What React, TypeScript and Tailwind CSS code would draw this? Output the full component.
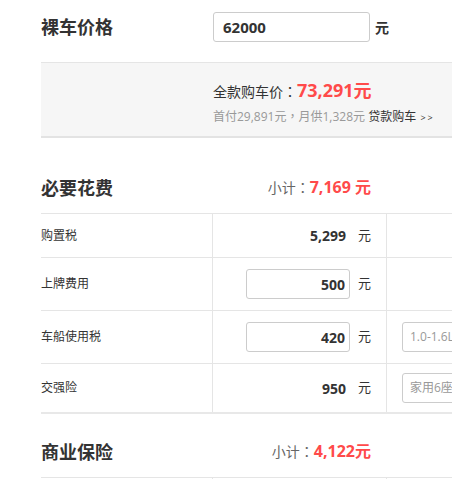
const FONT = "font-['Open_Sans','Noto_Sans_CJK_SC',sans-serif]";
const PUNCT = "font-['Noto_Sans_CJK_TC',sans-serif]";

type Row = {
  label: string;
  value: string;
  editable?: boolean;
  extra?: string;
  h: string;
};

const ROWS: Row[] = [
  { label: "购置税", value: "5,299", h: "h-[43px]" },
  { label: "上牌费用", value: "500", editable: true, h: "h-[53px]" },
  { label: "车船使用税", value: "420", editable: true, extra: "1.0-1.6L(含)", h: "h-[53px]" },
  { label: "交强险", value: "950", extra: "家用6座以下", h: "h-[49px]" },
];

function Section({ title, amount, h }: { title: string; amount: string; h: string }) {
  return (
    <div className={`flex items-end ${h} pb-[11px]`}>
      <h3 className="w-[171px] leading-[28px] text-[18px] font-bold text-[#333]">{title}</h3>
      <div className="w-[159px] leading-[28px] text-right text-[14px] text-[#666]">
        小计<span className={PUNCT}>：</span>
        <span className="text-[16px] font-bold text-[#ff4a4a]">{amount}</span>
      </div>
    </div>
  );
}

export default function App() {
  return (
    <div className={`${FONT} w-[452px] h-[479px] overflow-hidden bg-white text-[#333]`}>
      <div className="pl-[41px] w-[700px]">
        {/* 裸车价格 */}
        <div className="flex items-center h-[62px] pb-[8px]">
          <h2 className="w-[172px] text-[18px] font-bold">裸车价格</h2>
          <input
            readOnly
            value="62000"
            className="w-[157px] h-[30px] border border-[#ccc] rounded-[3px] px-[9px] text-[15px] font-bold text-[#333] outline-none"
          />
          <span className="ml-[5px] text-[14px] font-bold">元</span>
        </div>

        {/* 全款 */}
        <div className="bg-[#f6f6f6] border-t border-b-2 border-t-[#e5e5e5] border-b-[#e3e3e3] h-[76px] pl-[172px] pt-[14px]">
          <div className="flex items-baseline text-[14px] text-[#333]">
            全款购车价<span className={PUNCT}>：</span>
            <span className="text-[18px] font-bold text-[#ff4a4a]">73,291元</span>
          </div>
          <div className="mt-[3px] text-[12px] text-[#999]">
            首付29,891元<span className={PUNCT}>，</span>月供1,328元{" "}
            <span className="text-[#333]">贷款购车</span>
            <span className="text-[9px] text-[#333] tracking-[2px]"> &gt;&gt;</span>
          </div>
        </div>

        <Section title="必要花费" amount="7,169 元" h="h-[75px]" />

        <div className="border-t border-[#e5e5e5] border-b-2 border-b-[#e8e8e8]">
          {ROWS.map((r, i) => (
            <div
              key={r.label}
              className={`flex ${r.h} ${i > 0 ? "border-t border-[#e5e5e5]" : ""}`}
            >
              <div className="w-[171px] flex items-center text-[12px]">{r.label}</div>
              <div className="w-[174px] border-l border-[#e5e5e5] flex items-center justify-end pr-[15px]">
                {r.editable ? (
                  <input
                    readOnly
                    value={r.value}
                    className="w-[104px] h-[30px] border border-[#ccc] rounded-[3px] pr-[4px] text-right text-[14px] font-bold text-[#333] outline-none"
                  />
                ) : (
                  <span className="w-[104px] pr-[4px] text-right text-[14px] font-bold">{r.value}</span>
                )}
                <span className="ml-[8px] text-[13px]">元</span>
              </div>
              <div className="flex-1 border-l border-[#e5e5e5] flex items-center pl-[15px]">
                {r.extra && (
                  <div className="w-[140px] h-[30px] border border-[#ccc] rounded-[3px] px-[7px] flex items-center text-[12px] text-[#999] whitespace-nowrap">
                    {r.extra}
                  </div>
                )}
              </div>
            </div>
          ))}
        </div>

        <Section title="商业保险" amount="4,122元" h="h-[63px]" />

        <div className="border-t border-[#e5e5e5] flex h-[20px]">
          <div className="w-[171px]" />
          <div className="w-[174px] border-l border-[#e5e5e5]" />
          <div className="flex-1 border-l border-[#e5e5e5]" />
        </div>
      </div>
    </div>
  );
}
